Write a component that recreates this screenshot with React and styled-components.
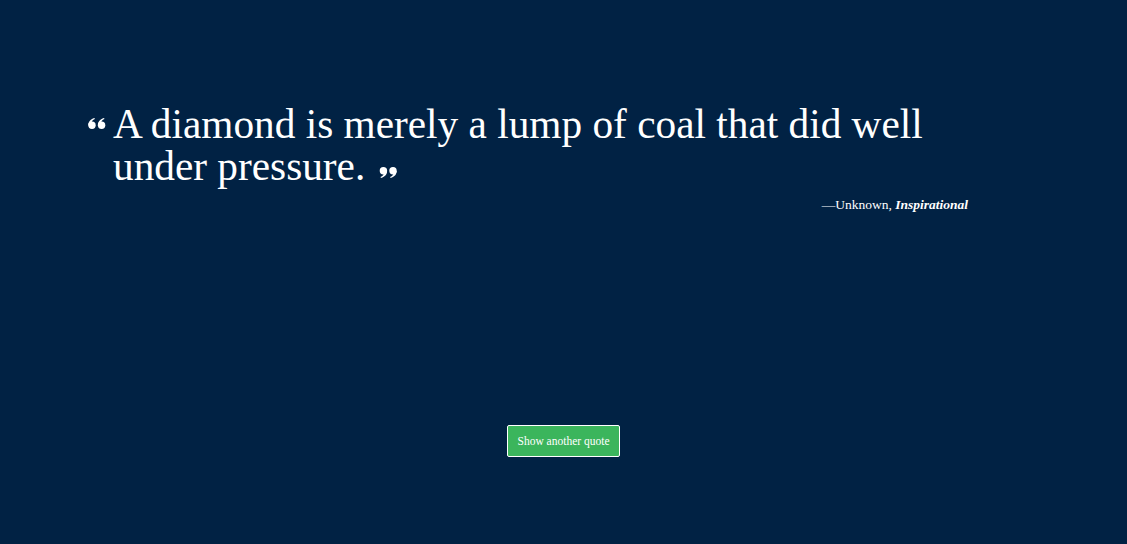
import React from "react";
import styled, { createGlobalStyle } from "styled-components";

const Global = createGlobalStyle`
  html, body { margin: 0; padding: 0; background: #012244; }
  body { font-family: "Liberation Serif", "DejaVu Serif", serif; }
`;

const Page = styled.main`
  width: 1127px;
  height: 544px;
  background: #012244;
  color: #ffffff;
  display: flex;
  flex-direction: column;
  box-sizing: border-box;
  padding-top: 103px;
`;

const QuoteBlock = styled.figure`
  margin: 0;
  width: 880px;
  margin-left: 88px;
  display: flex;
  flex-direction: column;
`;

const QuoteText = styled.blockquote`
  margin: 0;
  display: flex;
  align-items: flex-start;
`;

const MarkSvg = styled.svg`
  flex: none;
  width: 18px;
  height: 11px;
  fill: #ffffff;
  margin-top: ${(p) => p.$top || 0}px;
  margin-right: ${(p) => p.$right || 0}px;
  margin-left: ${(p) => p.$left || 0}px;
  vertical-align: ${(p) => p.$valign || "baseline"};
`;

const Words = styled.p`
  margin: 0;
  font-size: 41.3px;
  line-height: 42px;
  max-width: 840px;
`;

const Caption = styled.figcaption`
  align-self: flex-end;
  font-size: 13.5px;
  margin-top: 10px;
`;

const Category = styled.cite`
  font-style: italic;
  font-weight: bold;
`;

const Actions = styled.div`
  display: flex;
  justify-content: center;
  margin-top: 212px;
`;

const Button = styled.button`
  background: #3bb55c;
  color: #ffffff;
  border: 1.5px solid #ffffff;
  border-radius: 2px;
  width: 113px;
  height: 32px;
  font-family: "Liberation Serif", serif;
  font-size: 11.5px;
  font-weight: normal;
  cursor: pointer;
`;

function Six({ x = 0 }) {
  return (
    <g transform={`translate(${x} 0)`}>
      <circle cx="4" cy="7.2" r="3.7" />
      <path d="M0.3 7.6 C0.2 4 2.2 1.3 6.4 0 L6.9 1 C4.6 2 3.5 3.6 3.4 5 Z" />
    </g>
  );
}

function OpenQuote(props) {
  return (
    <MarkSvg viewBox="0 0 18 11" {...props}>
      <Six x={0} />
      <Six x={9.6} />
    </MarkSvg>
  );
}

function CloseQuote(props) {
  return (
    <MarkSvg viewBox="0 0 18 11" {...props}>
      <g transform="rotate(180 9 5.5)">
        <Six x={0} />
        <Six x={9.6} />
      </g>
    </MarkSvg>
  );
}

export default function App() {
  return (
    <>
      <Global />
      <Page>
        <QuoteBlock>
          <QuoteText>
            <OpenQuote $top={15} $right={7} />
            <Words>
              A diamond is merely a lump of coal that did well under pressure.
              <CloseQuote $left={14} $valign="2px" />
            </Words>
          </QuoteText>
          <Caption>
            —Unknown, <Category>Inspirational</Category>
          </Caption>
        </QuoteBlock>
        <Actions>
          <Button>Show another quote</Button>
        </Actions>
      </Page>
    </>
  );
}
